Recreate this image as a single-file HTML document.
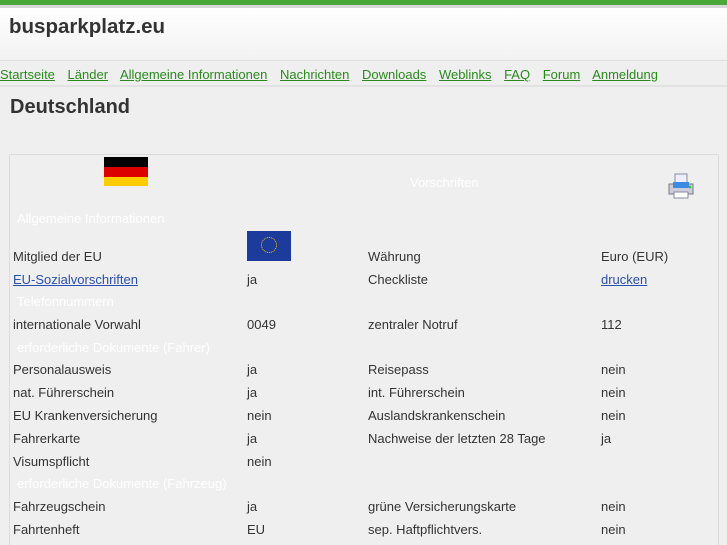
<!DOCTYPE html>
<html><head><style>
html,body{margin:0;width:727px;height:545px;overflow:hidden}
body{background:#efefef;font-family:"Liberation Sans",sans-serif;color:#333;position:relative}
.top{position:absolute;left:0;top:0;width:727px;height:5px;background:#4aa83a}
.top2{position:absolute;left:0;top:5px;width:727px;height:3px;background:#d8d8d8}
.hdr{position:absolute;left:0;top:8px;width:727px;height:52px;background:linear-gradient(#fff,#f2f2f2);border-bottom:1px solid #ddd}
.logo{position:absolute;left:9px;top:15px;font-size:20.5px;font-weight:bold;color:#333}
.nav{position:absolute;left:0;top:67px;font-size:13px;white-space:nowrap}
.nav a{color:#2a8a1e;text-decoration:underline;margin-right:9px}
.line{position:absolute;left:0;top:85px;width:727px;height:2px;background:#e2e2e2}
h1{position:absolute;left:10px;top:96px;margin:0;font-size:20px;color:#333}
.box{position:absolute;left:9px;top:154px;width:708px;height:400px;border:1px solid #dcdcdc}
.t{position:absolute;font-size:13px;white-space:nowrap}
.w{color:#fff}
a.b{color:#2a4fb0;text-decoration:underline}
</style></head><body>
<div class="top"></div><div class="top2"></div>
<div class="hdr"></div><div class="logo">busparkplatz.eu</div>
<div class="nav"><a>Startseite</a> <a>Länder</a> <a>Allgemeine Informationen</a> <a>Nachrichten</a> <a>Downloads</a> <a>Weblinks</a> <a>FAQ</a> <a>Forum</a> <a>Anmeldung</a></div>
<div class="line"></div>
<h1>Deutschland</h1>
<div class="box"></div>
<div style="position:absolute;left:104px;top:157px;width:44px;height:10px;background:#000"></div>
<div style="position:absolute;left:104px;top:167px;width:44px;height:10px;background:#d00"></div>
<div style="position:absolute;left:104px;top:177px;width:44px;height:9px;background:#fc0"></div>
<div class="t w" style="left:410px;top:175px">Vorschriften</div>
<svg style="position:absolute;left:667px;top:172px" width="28" height="28"><rect x="8" y="2" width="12" height="10" fill="#eef" stroke="#88a"/><path d="M2 12h24v10H2z" fill="#ccd" stroke="#778"/><rect x="6" y="10" width="16" height="6" fill="#3b8be0"/><rect x="7" y="20" width="14" height="6" fill="#fff" stroke="#889"/><circle cx="23" cy="15" r="1.3" fill="#2c2"/></svg>
<div class="t w" style="left:17px;top:211px">Allgemeine Informationen</div>
<div style="position:absolute;left:247px;top:231px;width:44px;height:30px;background:#1d3b9a"></div>
<div style="position:absolute;left:261px;top:237px;width:14px;height:14px;border:1px dotted #fc0;border-radius:50%"></div>
<div class="t" style="left:13px;top:249px">Mitglied der EU</div><div class="t" style="left:368px;top:249px">Währung</div><div class="t" style="left:601px;top:249px">Euro (EUR)</div>
<div class="t" style="left:13px;top:272px"><a class="b">EU-Sozialvorschriften</a></div><div class="t" style="left:247px;top:272px">ja</div><div class="t" style="left:368px;top:272px">Checkliste</div><div class="t" style="left:601px;top:272px"><a class="b">drucken</a></div>
<div class="t w" style="left:17px;top:294px">Telefonnummern</div>
<div class="t" style="left:13px;top:317px">internationale Vorwahl</div><div class="t" style="left:247px;top:317px">0049</div><div class="t" style="left:368px;top:317px">zentraler Notruf</div><div class="t" style="left:601px;top:317px">112</div>
<div class="t w" style="left:17px;top:340px">erforderliche Dokumente (Fahrer)</div>
<div class="t" style="left:13px;top:362px">Personalausweis</div><div class="t" style="left:247px;top:362px">ja</div><div class="t" style="left:368px;top:362px">Reisepass</div><div class="t" style="left:601px;top:362px">nein</div>
<div class="t" style="left:13px;top:385px">nat. Führerschein</div><div class="t" style="left:247px;top:385px">ja</div><div class="t" style="left:368px;top:385px">int. Führerschein</div><div class="t" style="left:601px;top:385px">nein</div>
<div class="t" style="left:13px;top:408px">EU Krankenversicherung</div><div class="t" style="left:247px;top:408px">nein</div><div class="t" style="left:368px;top:408px">Auslandskrankenschein</div><div class="t" style="left:601px;top:408px">nein</div>
<div class="t" style="left:13px;top:431px">Fahrerkarte</div><div class="t" style="left:247px;top:431px">ja</div><div class="t" style="left:368px;top:431px">Nachweise der letzten 28 Tage</div><div class="t" style="left:601px;top:431px">ja</div>
<div class="t" style="left:13px;top:454px">Visumspflicht</div><div class="t" style="left:247px;top:454px">nein</div>
<div class="t w" style="left:17px;top:476px">erforderliche Dokumente (Fahrzeug)</div>
<div class="t" style="left:13px;top:499px">Fahrzeugschein</div><div class="t" style="left:247px;top:499px">ja</div><div class="t" style="left:368px;top:499px">grüne Versicherungskarte</div><div class="t" style="left:601px;top:499px">nein</div>
<div class="t" style="left:13px;top:522px">Fahrtenheft</div><div class="t" style="left:247px;top:522px">EU</div><div class="t" style="left:368px;top:522px">sep. Haftpflichtvers.</div><div class="t" style="left:601px;top:522px">nein</div>
</body></html>
